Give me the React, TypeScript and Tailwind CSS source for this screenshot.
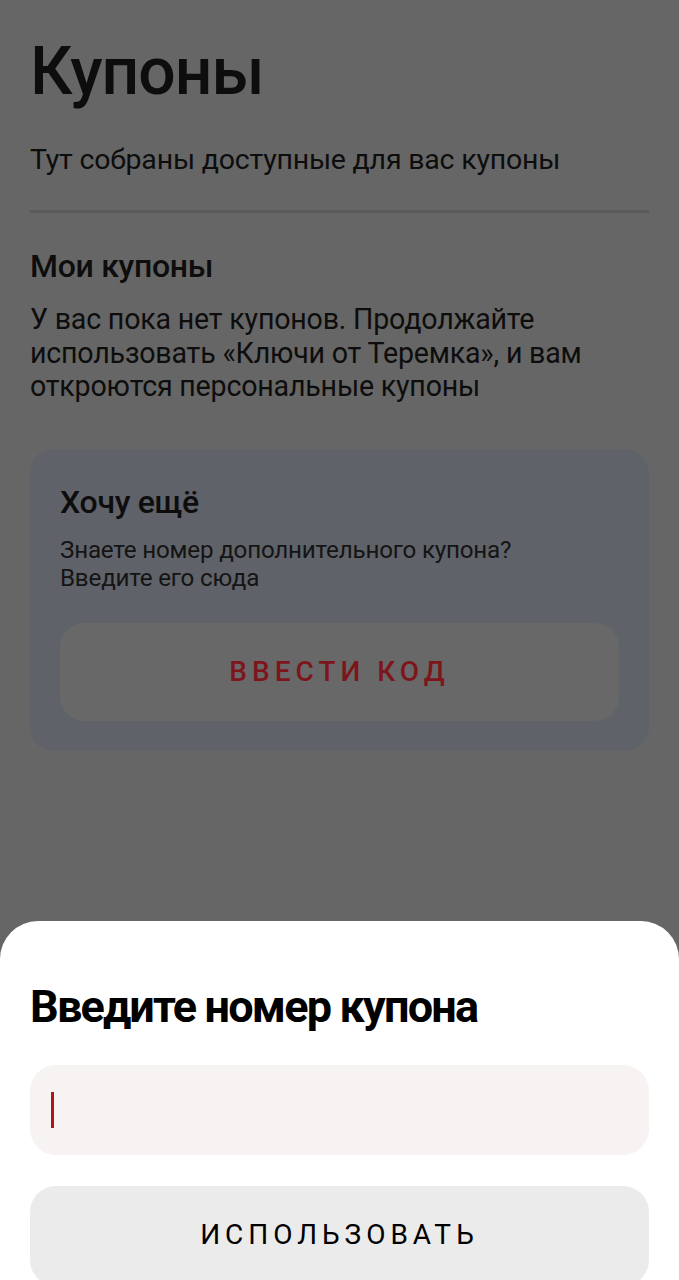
import React from "react";

export default function App() {
  return (
    <div
      className="relative h-[1280px] w-[679px] overflow-hidden bg-[#666666] text-[#0d0d0d]"
      style={{ fontFamily: "Roboto, 'Noto Sans', sans-serif" }}
    >
      <div className="flex flex-col px-[30px]">
        <h1 className="mt-[32px] text-[66px] leading-[80px] font-medium tracking-[-1px]">Купоны</h1>
        <p className="mt-[31px] text-[28.5px] leading-[34px] tracking-[-0.2px]">Тут собраны доступные для вас купоны</p>
        <div className="mt-[33px] h-[3px] w-full bg-[#5a5a5a]" />
        <h2 className="mt-[36px] text-[32px] leading-[34px] font-medium tracking-[-0.3px]">Мои купоны</h2>
        <p className="mt-[20px] text-[28.6px] leading-[33.5px] tracking-[-0.2px]">
          У вас пока нет купонов. Продолжайте использовать «Ключи от Теремка», и вам откроются персональные купоны
        </p>
        <div className="mt-[45px] flex flex-col rounded-[24px] bg-[#5f6268] px-[30px] pt-[34px] pb-[30px]">
          <h3 className="text-[32px] leading-[38px] font-medium tracking-[-0.3px]">Хочу ещё</h3>
          <p className="mt-[15px] text-[24.2px] leading-[28px] tracking-[-0.2px] text-[#141414]">
            Знаете номер дополнительного купона?
            <br />
            Введите его сюда
          </p>
          <button className="mt-[31px] flex h-[98px] items-center justify-center rounded-[24px] bg-[#686868] text-[28px] font-medium tracking-[5px] text-[#7d161c]">
            ВВЕСТИ КОД
          </button>
        </div>
      </div>

      <div className="absolute left-0 right-0 top-[921px] bottom-0 flex flex-col rounded-t-[38px] bg-white px-[30px]">
        <h2 className="mt-[60px] text-[45px] leading-[52px] font-bold tracking-[-1.8px] text-black">
          Введите номер купона
        </h2>
        <div className="mt-[32px] flex h-[90px] shrink-0 items-center rounded-[26px] bg-[#f6f3f2] pl-[21px]">
          <div className="h-[36px] w-[3px] bg-[#b3141c]" />
        </div>
        <button className="mt-[31px] flex h-[100px] shrink-0 items-center justify-center rounded-[26px] bg-[#ebebeb] pb-[2px] text-[28px] font-normal tracking-[5px] text-black">
          ИСПОЛЬЗОВАТЬ
        </button>
      </div>
    </div>
  );
}
